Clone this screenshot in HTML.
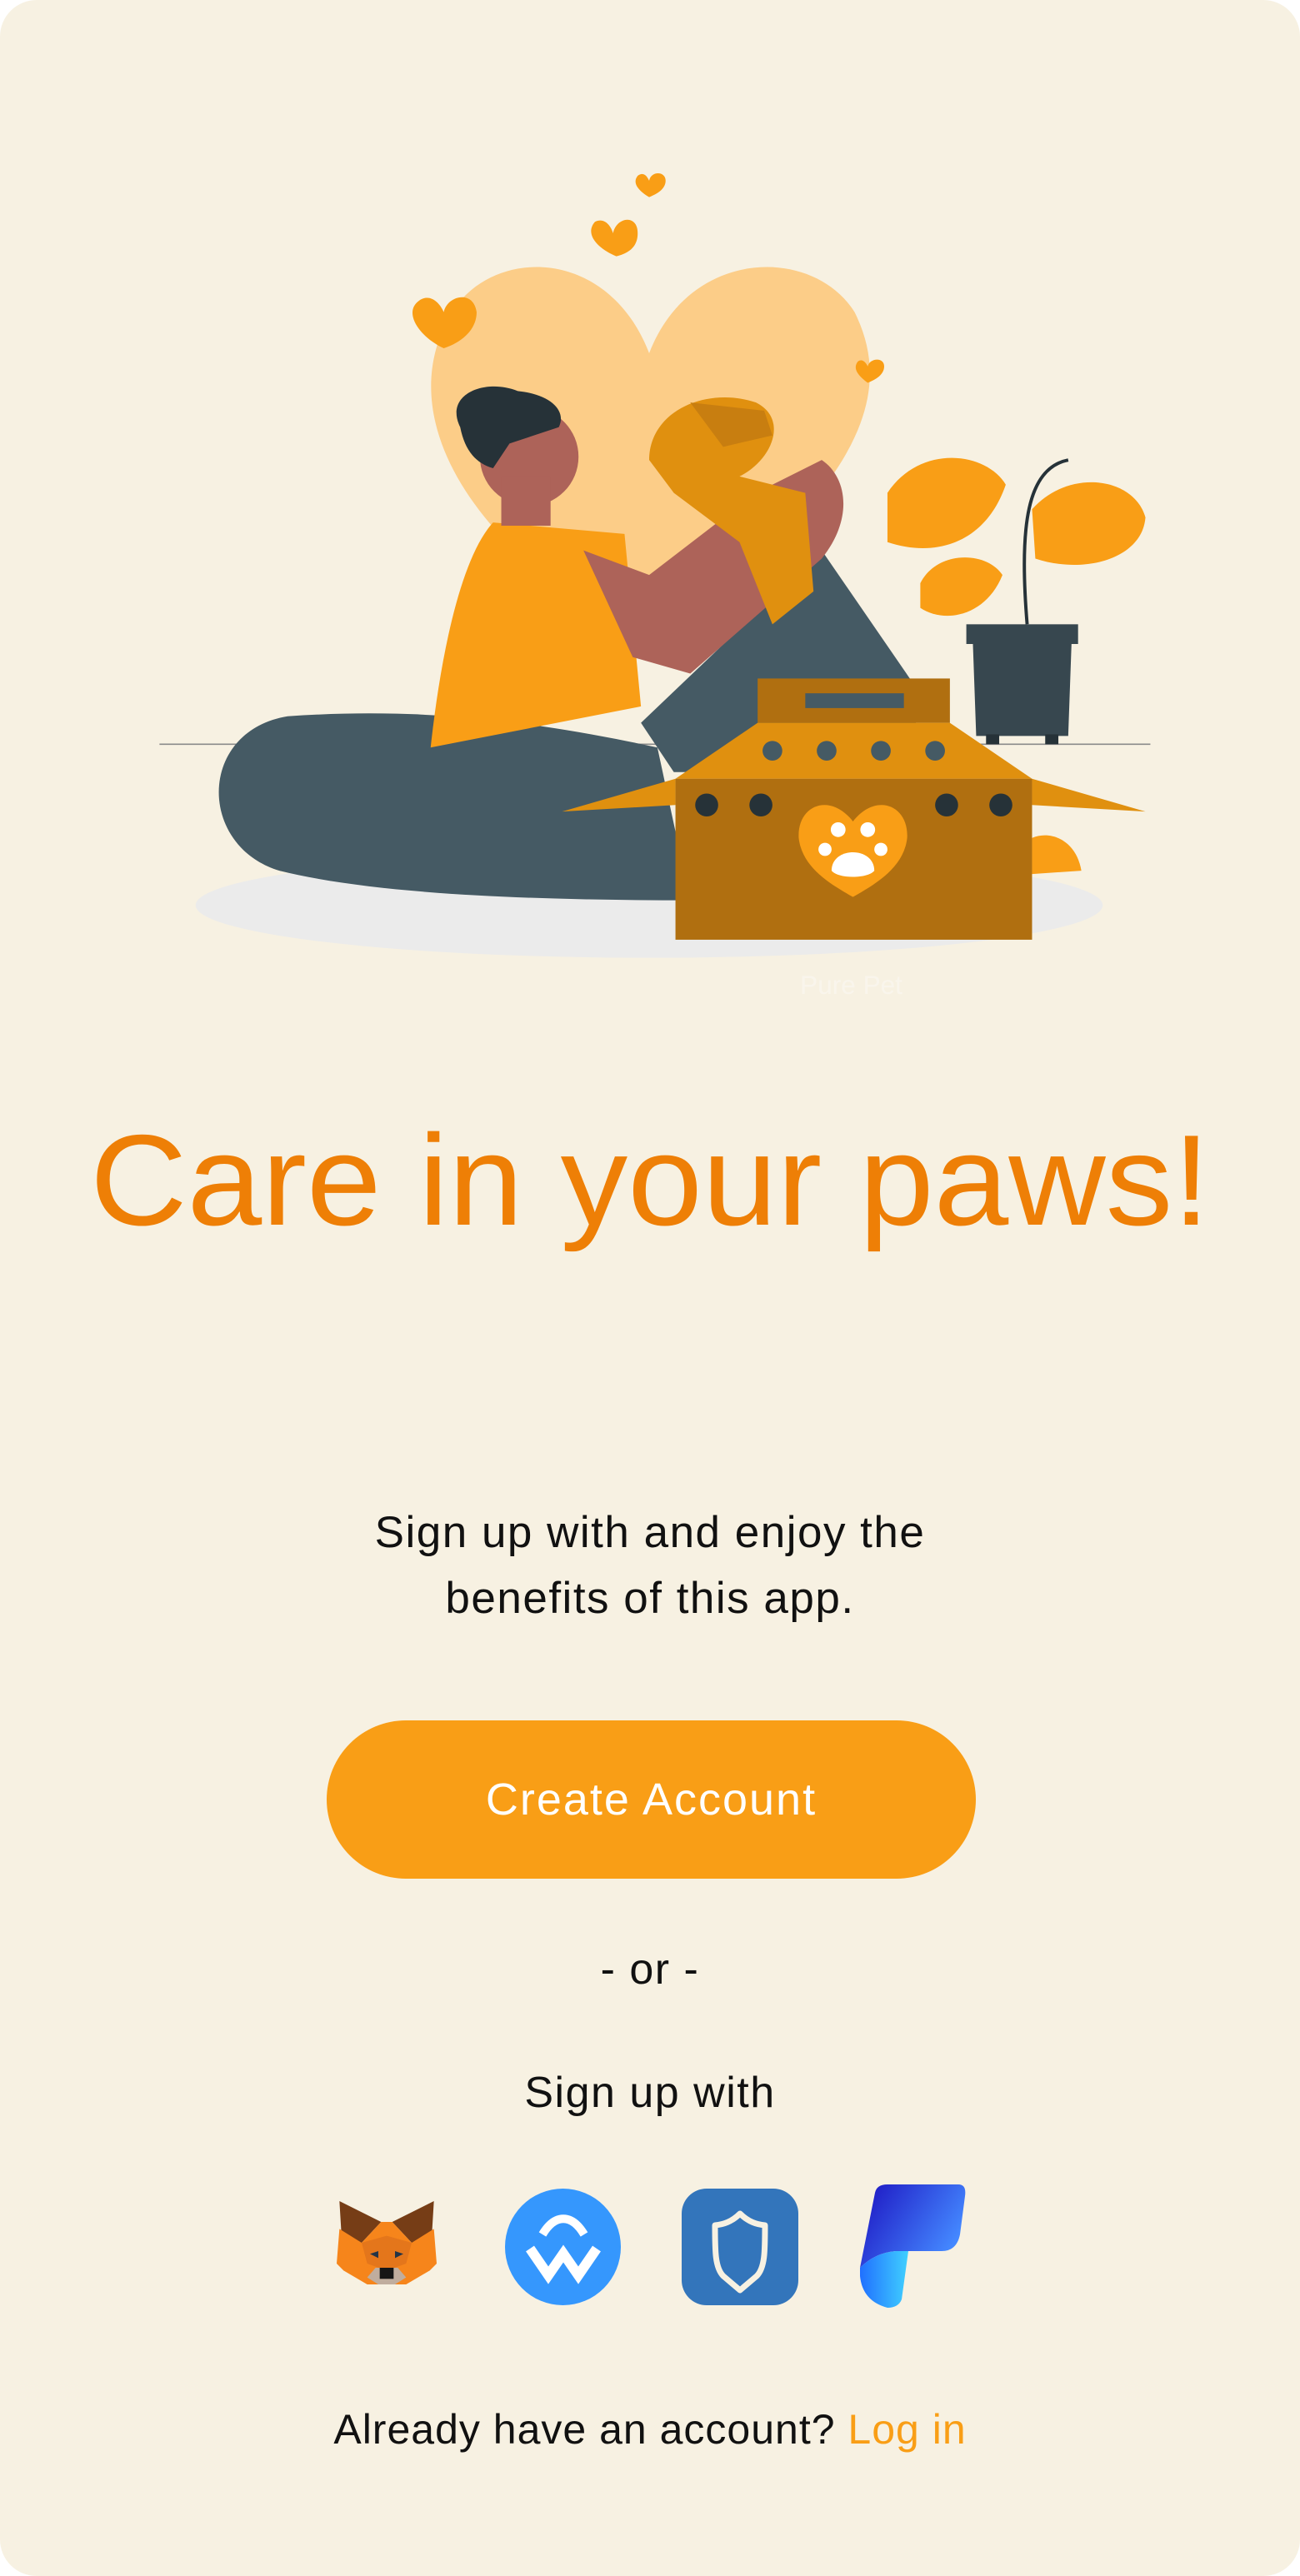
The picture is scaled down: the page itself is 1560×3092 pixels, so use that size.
<!DOCTYPE html>
<html><head><meta charset="utf-8"><style>
html,body{margin:0;padding:0;background:#fff}
#p{position:relative;width:1560px;height:3092px;background:#f7f1e2;border-radius:44px;overflow:hidden;font-family:"Liberation Sans",sans-serif}
.t{position:absolute;left:0;width:1560px;text-align:center;color:#111;white-space:nowrap;letter-spacing:1.5px}
</style></head><body><div id="p">
<svg style="position:absolute;left:0;top:0" width="1560" height="3092" viewBox="0 0 791 1568">
<path d="M395,215 C370,150 300,150 275,190 C245,240 270,300 330,350 L395,400 L440,360 C520,290 545,240 520,190 C495,150 420,150 395,215Z" fill="#fccd88"/>
<ellipse cx="395" cy="551" rx="276" ry="32" fill="#ebebeb"/>
<line x1="97" y1="453" x2="700" y2="453" stroke="#8a8a8a" stroke-width="0.8"/>
<path d="M390,440 L500,335 L555,415 L560,470 L410,470Z" fill="#455a64"/>
<path d="M175,436 C260,430 330,440 400,455 L420,548 C330,548 230,545 170,530 C120,515 120,445 175,436Z" fill="#455a64"/>
<path d="M300,318 L380,325 L390,430 L262,455 C268,400 280,340 300,318Z" fill="#f99e16"/>
<path d="M355,335 L395,350 L460,300 L500,280 C515,290 520,315 500,340 L420,410 L385,400Z" fill="#ad6359"/>
<path d="M395,280 C395,250 430,235 460,245 C480,255 470,280 450,290 L490,300 L495,360 L470,380 L450,330 L410,300Z" fill="#e0900f"/>
<path d="M420,245 L465,250 L470,265 L440,272Z" fill="#c87e10"/>
<circle cx="322" cy="278" r="30" fill="#ad6359"/>
<rect x="305" y="290" width="30" height="30" fill="#ad6359"/>
<path d="M280,260 C270,240 295,230 315,238 C335,240 345,250 340,260 L310,270 L300,285 C290,282 283,275 280,260Z" fill="#263238"/>
<path d="M540,300 C560,270 600,275 612,295 C600,330 570,340 540,330Z" fill="#f99e16"/>
<path d="M560,355 C570,335 600,335 610,350 C600,375 575,380 560,370Z" fill="#f99e16"/>
<path d="M628,310 C650,285 690,290 697,315 C695,340 660,350 630,340Z" fill="#f99e16"/>
<path d="M625,380 C620,320 625,285 650,280" fill="none" stroke="#263238" stroke-width="2"/>
<rect x="588" y="380" width="68" height="12" fill="#37474f"/>
<path d="M592,392 L652,392 L650,448 L594,448Z" fill="#37474f"/>
<rect x="600" y="447" width="8" height="6" fill="#263238"/><rect x="636" y="447" width="8" height="6" fill="#263238"/>
<path d="M628,510 C640,505 655,512 658,530 L628,532Z" fill="#f99e16"/>
<rect x="461" y="413" width="117" height="27" fill="#b06f10"/>
<rect x="490" y="422" width="60" height="9" fill="#455a64"/>
<path d="M461,440 L578,440 L628,474 L411,474Z" fill="#e0900f"/>
<path d="M342,494 L411,474 L411,490Z M628,474 L697,494 L628,490Z" fill="#e0900f"/>
<rect x="411" y="474" width="217" height="98" fill="#b06f10"/>
<g fill="#455a64"><circle cx="470" cy="457" r="6"/><circle cx="503" cy="457" r="6"/><circle cx="536" cy="457" r="6"/><circle cx="569" cy="457" r="6"/></g>
<g fill="#263238"><circle cx="430" cy="490" r="7"/><circle cx="463" cy="490" r="7"/><circle cx="576" cy="490" r="7"/><circle cx="609" cy="490" r="7"/></g>
<path d="M519,500 C505,482 485,490 486,510 C488,528 505,538 519,546 C533,538 550,528 552,510 C553,490 533,482 519,500Z" fill="#f99e16"/>
<g fill="#fff"><circle cx="510" cy="505" r="4.5"/><circle cx="528" cy="505" r="4.5"/><circle cx="502" cy="517" r="4"/><circle cx="536" cy="517" r="4"/><path d="M506,530 C506,515 532,515 532,530 C528,535 510,535 506,530Z"/></g>
<g fill="#f99e16">
<path d="M270,212 C255,205 245,190 255,183 C262,178 268,185 270,190 C272,180 288,176 290,190 C290,200 282,208 270,212Z"/>
<path d="M375,156 C365,152 355,143 362,135 C368,132 372,138 373,142 C375,132 388,130 388,142 C388,150 383,154 375,156Z"/>
<path d="M395,120 C390,117 384,112 388,107 C392,104 394,108 395,110 C396,104 405,104 405,110 C405,115 400,118 395,120Z"/>
<path d="M528,233 C524,230 518,225 522,220 C525,218 527,221 528,223 C529,218 538,217 538,223 C538,228 533,231 528,233Z"/>
</g>
<text x="518" y="605" font-size="16" fill="#fff" opacity="0.35" text-anchor="middle" font-family="Liberation Sans">Pure Pet</text>
</svg>
<div class="t" style="top:1317px;font-size:155px;color:#ee7f06;line-height:200px;letter-spacing:0"><span style="display:inline-block;transform:scaleX(1.04)">Care in your paws!</span></div>
<div class="t" style="top:1800px;font-size:53px;line-height:79px">Sign up with and enjoy the<br>benefits of this app.</div>
<div style="position:absolute;left:392px;top:2065px;width:779px;height:190px;border-radius:95px;background:#f99e16;color:#fff;font-size:54px;line-height:190px;text-align:center;letter-spacing:2px">Create Account</div>
<div class="t" style="top:2334px;font-size:52px;line-height:60px">- or -</div>
<div class="t" style="top:2482px;font-size:52px;line-height:60px">Sign up with</div>
<svg style="position:absolute;left:404px;top:2642px" width="120" height="105" viewBox="0 0 72 63">
<path d="M2,0 L32,15 L18,30 L5,50Z" fill="#763d16"/><path d="M70,0 L40,15 L54,30 L67,50Z" fill="#763d16"/>
<path d="M2,20 L18,30 L32,15 L40,15 L54,30 L70,20 L72,45 L67,50 L50,60 L22,60 L5,50 L0,45Z" fill="#f6851b"/>
<path d="M18,30 L36,25 L54,30 L50,45 L36,50 L22,45Z" fill="#e4761b"/>
<path d="M22,55 L30,60 L42,60 L50,55 L44,48 L28,48Z" fill="#c0ad9e"/><rect x="31" y="48" width="10" height="8" fill="#161616"/>
<path d="M24,38 L30,36 L30,41Z M48,38 L42,36 L42,41Z" fill="#233447"/></svg>
<div style="position:absolute;left:606px;top:2627px;width:139px;height:140px;border-radius:50%;background:#3597fd"></div>
<svg style="position:absolute;left:606px;top:2627px" width="139" height="140" viewBox="0 0 139 140">
<path d="M45,55 C60,30 80,30 95,55" fill="none" stroke="#fff" stroke-width="10"/>
<path d="M30,72 L52,104 L70,78 L88,104 L110,72" fill="none" stroke="#fff" stroke-width="12" stroke-linejoin="miter"/></svg>
<div style="position:absolute;left:818px;top:2627px;width:140px;height:140px;border-radius:30px;background:#3375bb"></div>
<svg style="position:absolute;left:818px;top:2627px" width="140" height="140" viewBox="0 0 140 140">
<path d="M70,30 C80,40 90,43 100,44 C100,75 100,95 90,105 L70,122 L50,105 C40,95 40,75 40,44 C50,43 60,40 70,30Z" fill="none" stroke="#f7f1e2" stroke-width="7" stroke-linejoin="round"/></svg>
<svg style="position:absolute;left:1030px;top:2622px" width="130" height="148" viewBox="0 0 130 148">
<defs><linearGradient id="g1" x1="0" y1="0" x2="1" y2="0.5"><stop offset="0" stop-color="#1c12c0"/><stop offset="1" stop-color="#4488ff"/></linearGradient>
<linearGradient id="g2" x1="0" y1="0" x2="1" y2="0"><stop offset="0" stop-color="#2070ff"/><stop offset="1" stop-color="#40d0ff"/></linearGradient></defs>
<path d="M20,10 Q22,0 35,0 L120,0 Q130,0 128,14 L122,60 Q118,80 100,80 L45,80 Q20,82 2,100 Z" fill="url(#g1)"/>
<path d="M2,100 Q20,82 45,80 L60,80 L52,138 Q48,148 35,148 Q5,140 2,110Z" fill="url(#g2)"/></svg>
<div class="t" style="top:2886px;font-size:50px;line-height:60px;letter-spacing:1px">Already have an account? <span style="color:#f99e16">Log in</span></div>
</div></body></html>
